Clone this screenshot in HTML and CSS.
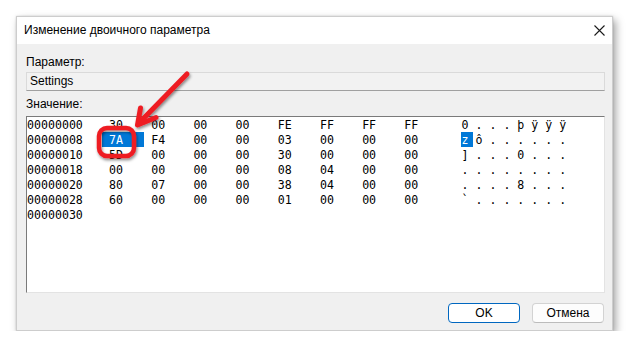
FILE: index.html
```html
<!DOCTYPE html>
<html>
<head>
    <title>Изменение двоичного параметра</title>
    <link rel="stylesheet" href="styles.css">
</head>
<body>
    <div class="window">
        <div class="titlebar">
            <span class="title">Изменение двоичного параметра</span>
            <span class="close">
                <svg width="11" height="11" viewBox="0 0 11 11">
                    <path d="M0.5 0.5 L10.5 10.5 M10.5 0.5 L0.5 10.5" stroke="#1a1a1a" stroke-width="1.1" fill="none"/>
                </svg>
            </span>
        </div>
        <div class="content">
            <label class="caption">Параметр:</label>
            <div class="field">Settings</div>
            <label class="caption second">Значение:</label>
            <div class="hexbox">
                <div class="row"><span>00000000</span><span>30</span><span>00</span><span>00</span><span>00</span><span>FE</span><span>FF</span><span>FF</span><span>FF</span><span class="ascii">0 . . . þ ÿ ÿ ÿ</span></div>
                <div class="row"><span>00000008</span><span><span class="sel-hex">7A</span></span><span>F4</span><span>00</span><span>00</span><span>03</span><span>00</span><span>00</span><span>00</span><span class="ascii"><span class="sel-char">z</span> ô . . . . . .</span></div>
                <div class="row"><span>00000010</span><span>5D</span><span>00</span><span>00</span><span>00</span><span>30</span><span>00</span><span>00</span><span>00</span><span class="ascii">] . . . 0 . . .</span></div>
                <div class="row"><span>00000018</span><span>00</span><span>00</span><span>00</span><span>00</span><span>08</span><span>04</span><span>00</span><span>00</span><span class="ascii">. . . . . . . .</span></div>
                <div class="row"><span>00000020</span><span>80</span><span>07</span><span>00</span><span>00</span><span>38</span><span>04</span><span>00</span><span>00</span><span class="ascii">. . . . 8 . . .</span></div>
                <div class="row"><span>00000028</span><span>60</span><span>00</span><span>00</span><span>00</span><span>01</span><span>00</span><span>00</span><span>00</span><span class="ascii">` . . . . . . .</span></div>
                <div class="row"><span>00000030</span></div>
            </div>
            <div class="buttons">
                <button class="btn default">OK</button>
                <button class="btn">Отмена</button>
            </div>
        </div>
    </div>

    <!-- red annotation drawn over the dialog -->
    <svg class="annotation" width="630" height="348" viewBox="0 0 630 348">
        <defs>
            <filter id="shade" x="-20%" y="-20%" width="140%" height="140%">
                <feDropShadow dx="1" dy="2" stdDeviation="1.4" flood-color="#000" flood-opacity="0.45"/>
            </filter>
        </defs>
        <g filter="url(#shade)" stroke="#ee1c24" fill="none" stroke-linecap="round" stroke-linejoin="round">
            <rect x="99" y="128" width="35" height="28" rx="8" stroke-width="4.5"/>
            <path d="M187 74 L140 122" stroke-width="5"/>
            <path d="M140.5 108 L137.5 125 L156 117.5" stroke-width="5"/>
        </g>
    </svg>
</body>
</html>
```

FILE: styles.css
```css
body {
    margin: 0;
    padding: 16px 0 0 16px;
    background: #ffffff;
    font-family: "Liberation Sans", Arial, sans-serif;
    font-size: 12px;
    color: #000;
}
.window {
    width: 597px;
    height: 315px;
    box-sizing: border-box;
    border: 1px solid #cdcdcd;
    background: #f0f0f0;
    box-shadow: 3px 4px 8px rgba(0, 0, 0, 0.35), 0 0 2px rgba(0, 0, 0, 0.15);
    display: flex;
    flex-direction: column;
}
.titlebar {
    height: 27px;
    background: #fff;
    display: flex;
    align-items: center;
    justify-content: space-between;
    padding: 0 7px 1px 7px;
    box-sizing: border-box;
}
.title {
    font-size: 12px;
    color: #000;
}
.close {
    display: flex;
    margin-right: 0;
}
.content {
    flex: 1;
    display: flex;
    flex-direction: column;
    padding: 11px 7px 7px 9px;
}
.caption {
    display: block;
    line-height: 15px;
    margin-bottom: 2px;
}
.caption.second {
    margin-top: 6px;
    margin-bottom: 4px;
}
.field {
    height: 19px;
    box-sizing: border-box;
    border: 1px solid #dadada;
    border-bottom-color: #a0a0a0;
    background: #f2f2f2;
    padding: 0 3px;
    line-height: 17px;
}
.hexbox {
    height: 177px;
    box-sizing: border-box;
    background: #fff;
    border: 1px solid #e3e3e3;
    border-top-color: #7a7a7a;
    border-left-color: #7a7a7a;
    padding-top: 1px;
    font-family: "DejaVu Sans Mono", "Liberation Mono", monospace;
    font-size: 11.6px;
}
.row {
    display: grid;
    grid-template-columns: 82px repeat(8, 42.2px) auto;
    line-height: 15px;
    height: 15px;
    white-space: pre;
}
.ascii {
    padding-left: 15px;
}
.sel-hex {
    background: #0078d7;
    color: #fff;
    padding: 1px 21px 0 7px;
    margin: 0 -21px 0 -7px;
}
.sel-char {
    background: #0078d7;
    color: #fff;
    padding: 1px 5px 0 1px;
    margin: 0 -5px 0 -1px;
}
.buttons {
    display: flex;
    justify-content: flex-end;
    gap: 12px;
    margin-top: 10px;
    padding-right: 1px;
}
.btn {
    width: 72px;
    height: 20px;
    box-sizing: border-box;
    font-family: "Liberation Sans", Arial, sans-serif;
    font-size: 12px;
    color: #000;
    background: #fdfdfd;
    border: 1px solid #d3d3d3;
    border-bottom-color: #bcbcbc;
    border-radius: 4px;
    padding: 0;
}
.btn.default {
    background: #fff;
    border: 1px solid #0067c0;
}
.annotation {
    position: absolute;
    top: 0;
    left: 0;
    pointer-events: none;
}
```
